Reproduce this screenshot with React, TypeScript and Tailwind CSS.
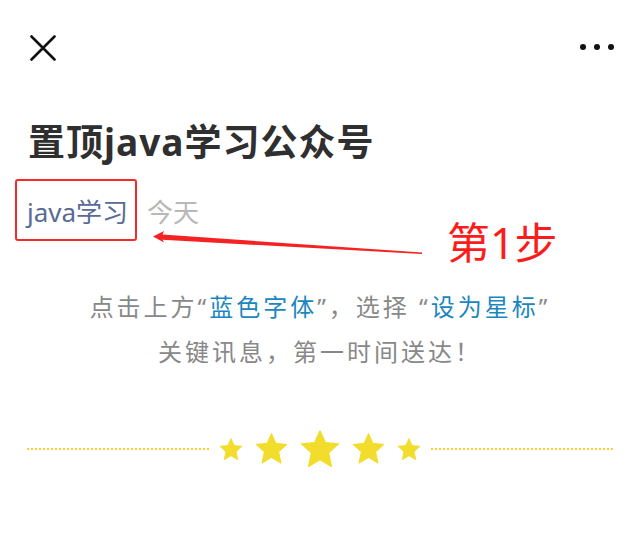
import React from 'react';

const FONT = { fontFamily: '"Noto Sans", "Noto Sans CJK SC", sans-serif' };

const Star = ({ size }: { size: number }) => (
  <svg width={size} height={size * 0.95} viewBox="0 0 24 23" className="shrink-0">
    <polygon
      points="12,0.5 15.2,7.6 23.2,8.4 17.2,13.8 18.9,22 12,17.9 5.1,22 6.8,13.8 0.8,8.4 8.8,7.6"
      fill="#f2dd2c"
      stroke="#f2dd2c"
      strokeWidth="0.8"
      strokeLinejoin="round"
    />
  </svg>
);

const App: React.FC = () => {
  return (
    <div className="relative w-[640px] h-[544px] bg-white overflow-hidden" style={FONT}>
      {/* top bar */}
      <div className="flex items-center justify-between h-[96px] pl-[30px] pr-[26px]">
        <svg width="26" height="26" viewBox="0 0 26 26">
          <path d="M1.5 1.5 L24.5 24.5 M24.5 1.5 L1.5 24.5" stroke="#111" strokeWidth="2.6" strokeLinecap="round" />
        </svg>
        <div className="flex items-center gap-[8px] -mt-[2px]">
          <span className="w-[6px] h-[6px] rounded-full bg-[#111]" />
          <span className="w-[6px] h-[6px] rounded-full bg-[#111]" />
          <span className="w-[6px] h-[6px] rounded-full bg-[#111]" />
        </div>
      </div>

      {/* title */}
      <h1 className="mt-[22px] pl-[28px] text-[37px] leading-[48px] font-bold text-[#2f2f2f] tracking-[1px]">
        置顶java学习公众号
      </h1>

      {/* meta */}
      <div className="mt-[28px] pl-[27px] flex items-center text-[26px] leading-[36px]">
        <span className="text-[#576b95]">java学习</span>
        <span className="ml-[19px] text-[#b8b8b8]">今天</span>
      </div>

      {/* intro */}
      <div className="mt-[54px] text-center text-[24px] leading-[45px] tracking-[3px] text-[#888888]">
        <p>
          点击上方“<span className="text-[#1b86c0]">蓝色字体</span>”，选择&nbsp;“<span className="text-[#1b86c0]">设为星标</span>”
        </p>
        <p>关键讯息，第一时间送达！</p>
      </div>

      {/* stars divider */}
      <div className="mt-[55px] flex items-center px-[27px] h-[40px]">
        <div className="flex-1 border-t-2 border-dotted border-[#f3d530]" />
        <div className="flex items-center gap-3 mx-[10px]">
          <Star size={24} />
          <Star size={33} />
          <Star size={40} />
          <Star size={33} />
          <Star size={24} />
        </div>
        <div className="flex-1 border-t-2 border-dotted border-[#f3d530]" />
      </div>

      {/* annotations */}
      <div className="absolute left-[15px] top-[179px] w-[122px] h-[62px] border-2 border-[#f42b2b] rounded-[3px]" />
      <svg className="absolute left-0 top-0 pointer-events-none" width="640" height="544" viewBox="0 0 640 544">
        <polygon
          points="153,236.5 164,231 162.5,234.5 422,252.6 422,254 162.5,239.8 164,242.5"
          fill="#f42222"
        />
      </svg>
      <div className="absolute left-[447px] top-[221px] text-[43px] leading-none text-[#fb1c1c]">第1步</div>
    </div>
  );
};

export default App;
